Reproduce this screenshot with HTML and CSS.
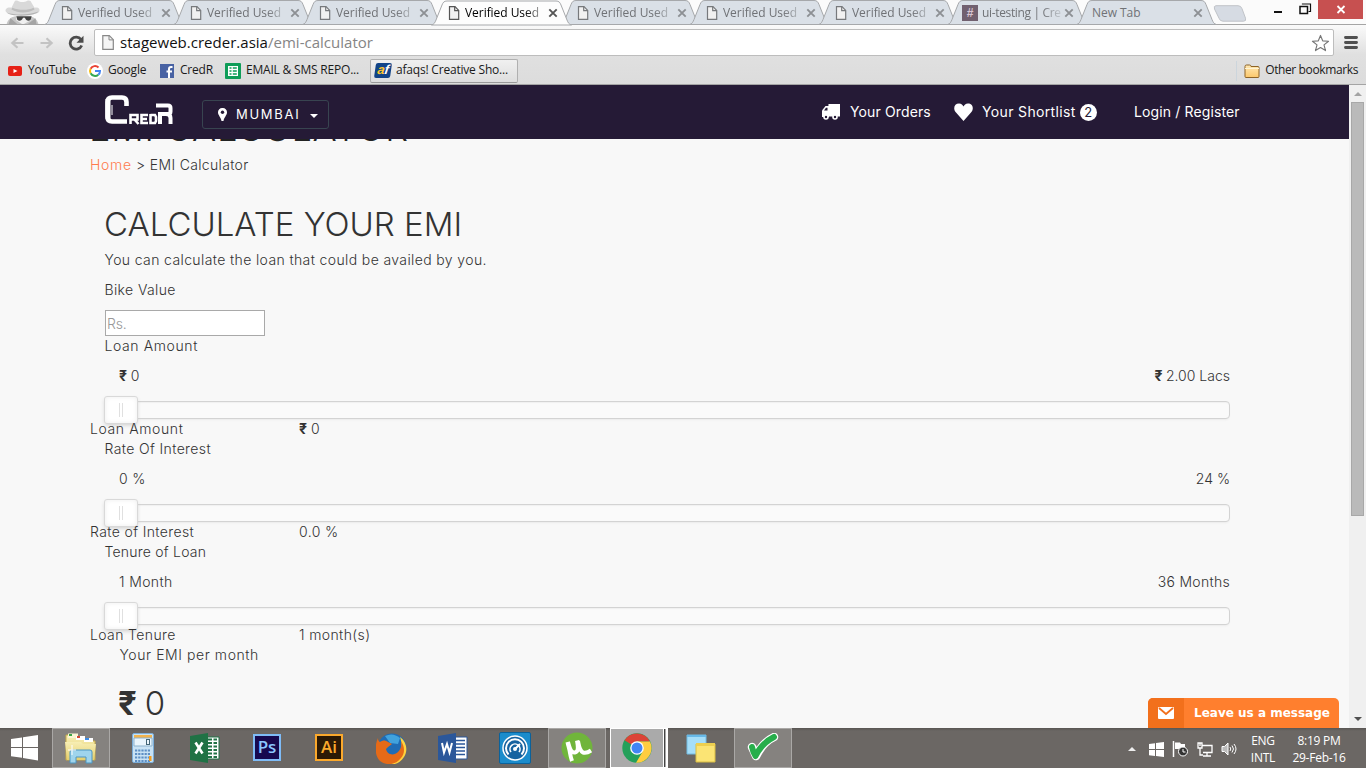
FILE: index.html
```html
<!DOCTYPE html>
<html lang="en">
<head>
<meta charset="utf-8">
<title>Verified Used Bikes</title>
<link rel="stylesheet" href="styles.css">
</head>
<body>
<svg class="defs" aria-hidden="true">
  <defs>
    <linearGradient id="folderfill" x1="0" y1="0" x2="0" y2="1"><stop offset="0" stop-color="#ffe9b5"/><stop offset="1" stop-color="#fbc76b"/></linearGradient>
    <linearGradient id="yellow" x1="0" y1="0" x2="0" y2="1"><stop offset="0" stop-color="#f7eeb4"/><stop offset="1" stop-color="#e5cf6d"/></linearGradient>
    <symbol id="tabshape" viewBox="0 0 141 25"><path d="M0.5 24.5 C3 24 4 22 5 19.500 L11 4.500 C12 2 13 .5 16 .5 H125 C128 .5 129 2 130 4.500 L136 19.500 C137 22 138 24 140.500 24.500Z" stroke="#a6a8ab" stroke-width="1"/></symbol>
    <symbol id="page" viewBox="0 0 12 14"><path d="M1.500 .7H7l3.700 3.700v8.900H1.500z" fill="#f1f1f1" stroke="currentColor" stroke-width="1.200"/><path d="M6.700 .7v4h4" fill="none" stroke="currentColor" stroke-width="1.200"/></symbol>
    <symbol id="close" viewBox="0 0 10 10"><path d="M1.300 1.300l7.400 7.400M8.700 1.300L1.300 8.700" stroke="currentColor" stroke-width="1.900"/></symbol>
  </defs>
</svg>
<div class="screen">
  <div class="tabstrip">
    <svg class="incognito" viewBox="0 0 38 25"><path d="M2 25c1-4 4-7 9-8h15c5 1 8 4 9 8z" fill="#c6c6c6"/><path d="M11 12h17l-1 9-7 4h-2l-6-4z" fill="#f0f0f0"/><path d="M1 12c-1-3 2-5 6-4l3-6c1-2 3-1.500 5-.5 3 1 6 .5 8-.5 3-1 4 0 5 2l3 5c4-1 6 1 5 4-3 5-31 6-35 0z" fill="#d9d9d9"/><path d="M8 8c7 3 16 3 22 0l1 2c-7 4-17 4-24 0z" fill="#bdbdbd"/><path d="M2 13c9 3 23 3 33-1-3 5-28 6-33 1z" fill="#b3b3b3"/><path d="M12 17h16l-1 3.500c-2 2-5 1-6-2h-2c-1 3-4 4-6 2z" fill="#444"/><path d="M6 19l7 6H4zm26 0l-8 6h9z" fill="#a5a5a5"/></svg>
    <div class="tabs">
      <div class="tab"><svg class="shape"><use href="#tabshape"/></svg><svg class="fav"><use href="#page"/></svg><span class="title">Verified Used</span><svg class="x"><use href="#close"/></svg></div>
      <div class="tab"><svg class="shape"><use href="#tabshape"/></svg><svg class="fav"><use href="#page"/></svg><span class="title">Verified Used</span><svg class="x"><use href="#close"/></svg></div>
      <div class="tab"><svg class="shape"><use href="#tabshape"/></svg><svg class="fav"><use href="#page"/></svg><span class="title">Verified Used</span><svg class="x"><use href="#close"/></svg></div>
      <div class="tab active"><svg class="shape"><use href="#tabshape"/></svg><svg class="fav"><use href="#page"/></svg><span class="title">Verified Used</span><svg class="x"><use href="#close"/></svg></div>
      <div class="tab"><svg class="shape"><use href="#tabshape"/></svg><svg class="fav"><use href="#page"/></svg><span class="title">Verified Used</span><svg class="x"><use href="#close"/></svg></div>
      <div class="tab"><svg class="shape"><use href="#tabshape"/></svg><svg class="fav"><use href="#page"/></svg><span class="title">Verified Used</span><svg class="x"><use href="#close"/></svg></div>
      <div class="tab"><svg class="shape"><use href="#tabshape"/></svg><svg class="fav"><use href="#page"/></svg><span class="title">Verified Used</span><svg class="x"><use href="#close"/></svg></div>
      <div class="tab"><svg class="shape"><use href="#tabshape"/></svg><span class="hash">#</span><span class="title">ui-testing | Cre</span><svg class="x"><use href="#close"/></svg></div>
      <div class="tab"><svg class="shape"><use href="#tabshape"/></svg><span class="title bare">New Tab</span><svg class="x"><use href="#close"/></svg></div>
    </div>
    <svg class="newtab" viewBox="0 0 34 17"><path d="M3 .7H25q3 0 4 3l3.500 9.500q1 3-2 3H10q-3 0-4-3L1.500 4Q.5 .7 3 .7z" fill="#d6dbe3" stroke="#c0c3c8"/></svg>
    <svg class="winbtns" viewBox="0 0 92 19"><path d="M0 11h8v2H0z" fill="#111"/><path d="M28.500 4.500V4h8v7.500h-2" fill="none" stroke="#111" stroke-width="1.200"/><path d="M26 6.500h7.500v7H26z" fill="none" stroke="#111" stroke-width="1.500"/><path d="M44 0h45v19H44z" fill="#c75050"/><path d="M63.500 6l7 7m0-7l-7 7" stroke="#fff" stroke-width="1.800"/></svg>
  </div>

  <div class="toolbar">
    <div class="nav">
      <svg class="arrow" viewBox="0 0 16 14"><path d="M15 7H2M8 1.500L2 7l6 5.500" fill="none" stroke="#c3c3c3" stroke-width="2.600"/></svg>
      <svg class="arrow" viewBox="0 0 16 14"><path d="M1 7h13M8 1.500L14 7l-6 5.500" fill="none" stroke="#c3c3c3" stroke-width="2.600"/></svg>
      <svg class="reload" viewBox="0 0 16 16"><path d="M13 4.500A6 6 0 1 0 13.700 10.500" fill="none" stroke="#4c4c4c" stroke-width="2.800"/><path d="M15.500 .8v7h-7z" fill="#4c4c4c"/></svg>
      <div class="omnibox">
        <svg class="urlpage" viewBox="0 0 12 15"><path d="M.8 .7h6.500l4 4v9.600H.8z" fill="#f5f5f5" stroke="#888" stroke-width="1.200"/><path d="M7 .7v4.200h4.300" fill="none" stroke="#888"/></svg>
        <span class="url">stageweb.creder.asia<span class="path">/emi-calculator</span></span>
        <svg class="star" viewBox="0 0 20 19"><path d="M10 1.500l2.300 5.700 6.200.4-4.800 3.900 1.600 6L10 14.200l-5.300 3.300 1.600-6L1.500 7.600l6.200-.4z" fill="#fff" stroke="#777" stroke-width="1.200" stroke-linejoin="round"/></svg>
      </div>
      <svg class="menu" viewBox="0 0 14 13"><path d="M1.500 1.500h11M1.500 6.500h11M1.500 11.500h11" stroke="#505050" stroke-width="2.900" stroke-linecap="round"/></svg>
    </div>
    <div class="bookmarks">
      <div class="bm yt"><svg width="14" height="10" viewBox="0 0 14 10"><rect width="14" height="10" rx="2" fill="#e62117"/><path d="M5.500 3l4 2-4 2z" fill="#fff"/></svg><span>YouTube</span></div>
      <div class="bm gg"><svg width="16" height="16" viewBox="0 0 16 16"><circle cx="8" cy="8" r="8" fill="#fff"/><path d="M11.500 4.500A5 5 0 0 0 3.600 5.700" stroke="#ea4335" fill="none" stroke-width="2"/><path d="M3.600 5.700a5 5 0 0 0 0 4.600" stroke="#fbbc05" fill="none" stroke-width="2"/><path d="M3.600 10.300a5 5 0 0 0 7.700 1.400" stroke="#34a853" fill="none" stroke-width="2"/><path d="M8 8h5a5 5 0 0 1-1.700 3.800" stroke="#4285f4" fill="none" stroke-width="2"/></svg><span>Google</span></div>
      <div class="bm cr"><svg width="14" height="14" viewBox="0 0 14 14"><rect width="14" height="14" fill="#4862a3"/><path d="M12.500 3H11q-2 0-2 2v9M6.500 7.500H12" stroke="#fff" stroke-width="2" fill="none"/></svg><span>CredR</span></div>
      <div class="bm em"><svg width="16" height="16" viewBox="0 0 16 16"><rect width="16" height="16" rx="1" fill="#0f9d58"/><path d="M3 3h10v10H3z" fill="#fff"/><path d="M4.500 5h2M7.800 5h4M4.500 8h2M7.800 8h4M4.500 11h2M7.800 11h4" stroke="#0f9d58" stroke-width="1.600"/></svg><span>EMAIL &amp; SMS REPO...</span></div>
      <div class="bm af"><span class="aficon"><span class="a">a</span>f</span><span>afaqs! Creative Sho...</span></div>
      <div class="other"><svg width="16" height="14" viewBox="0 0 16 14"><path d="M1 12.500V2.500q0-1.500 1.500-1.500h3q1.500 0 1.500 1.500h7q1 0 1 1v9q0 1-1 1H2q-1 0-1-1z" fill="url(#folderfill)" stroke="#8d6326"/><path d="M1 4.500h14" stroke="#fff4d4"/></svg><span>Other bookmarks</span></div>
    </div>
  </div>

  <div class="viewport">
    <div class="site">
      <header class="head">
        <svg class="logo" viewBox="0 0 68 30" fill="none" stroke="#fff"><path d="M21.500 11V7q0-4.500-4.500-4.500H7Q2.500 2.500 2.500 7v15q0 4.500 4.500 4.500h15" stroke-width="4.600"/><path d="M3 4v20" stroke-width="5"/><path d="M7 10v10" stroke-width="1"/><path d="M25.500 29v-9h7v4.500h-7m4 0l4 4.500M43 20h-6.500v8H43M36.500 24H42M45.500 19v9H50l1-2v-4l-1-2h-4.500" stroke-width="2.600"/><path d="M51 10.500h12q2.500 0 2.500 2.500v3.500q0 2.500-2.500 2.500H55V29M61 19q4.500 0 4.500 4V29" stroke-width="4"/></svg>
        <div class="city"><svg width="9" height="13" viewBox="0 0 9 13"><path d="M4.500 0A4.300 4.300 0 0 1 9 4.500C9 7 6 9.500 5.500 13h-2C3 9.500 0 7 0 4.500A4.300 4.300 0 0 1 4.500 0z" fill="#fff"/><circle cx="4.500" cy="4.300" r="1.700" fill="#251a36"/></svg><span>MUMBAI</span><i class="caret"></i></div>
        <nav class="links">
          <a class="orders"><svg width="18" height="16" viewBox="0 0 18 16"><path d="M6.500 0H18v12.500H6z" fill="#fff"/><path d="M7 2H3.500L0 6.500v6.500h7z" fill="#fff"/><path d="M5.500 3.800H4L2 6.500h3.500z" fill="#251a36"/><circle cx="4" cy="13" r="2" fill="#251a36" stroke="#fff" stroke-width="1.600"/><circle cx="13" cy="13" r="2" fill="#251a36" stroke="#fff" stroke-width="1.600"/></svg><span>Your Orders</span></a>
          <a class="short"><svg width="19" height="18" viewBox="0 0 19 18"><path d="M9.500 18L2 9.600C-1.500 5.500.5.500 5 .5c2.500 0 3.700 1.500 4.500 3 .8-1.500 2-3 4.500-3 4.500 0 6.500 5 3 9.100z" fill="#fff"/></svg><span>Your Shortlist</span><b class="badge">2</b></a>
          <a class="login">Login / Register</a>
        </nav>
      </header>
      <main class="content">
        <div class="covered"><h1 class="title1">EMI CALCULATOR</h1></div>
        <div class="crumbs"><a class="home">Home</a> &gt; EMI Calculator</div>
        <div class="calc">
          <h2 class="heading">CALCULATE YOUR EMI</h2>
          <p class="lead">You can calculate the loan that could be availed by you.</p>
          <p class="lead">Bike Value</p>
          <input class="value" placeholder="Rs.">
        </div>
        <section class="slider">
          <div class="label wide">Loan Amount</div>
          <div class="range"><span><b class="rs">₹</b> 0</span><span class="max"><b class="rs">₹</b> 2.00 Lacs</span></div>
          <div class="track"><div class="handle"><i class="grip"></i></div></div>
          <div class="result wide"><span>Loan Amount</span><span><b class="rs">₹</b> 0</span></div>
        </section>
        <section class="slider">
          <div class="label">Rate Of Interest</div>
          <div class="range"><span>0 %</span><span class="max">24 %</span></div>
          <div class="track"><div class="handle"><i class="grip"></i></div></div>
          <div class="result"><span>Rate of Interest</span><span>0.0 %</span></div>
        </section>
        <section class="slider">
          <div class="label tight">Tenure of Loan</div>
          <div class="range"><span>1 Month</span><span class="max months">36 Months</span></div>
          <div class="track"><div class="handle"><i class="grip"></i></div></div>
          <div class="result"><span>Loan Tenure</span><span>1 month(s)</span></div>
        </section>
        <div class="emi">Your EMI per month</div>
        <div class="total"><b class="rs">₹</b> 0</div>
      </main>
      <div class="chat"><div class="mail"><svg width="16" height="12" viewBox="0 0 16 12"><rect width="16" height="12" rx="1" fill="#fff"/><path d="M1 1l7 6 7-6" fill="none" stroke="#f2701c" stroke-width="1.800"/></svg></div><span>Leave us a message</span></div>
    </div>
    <div class="scrollbar"><i class="up"></i><div class="thumb"></div><i class="down"></i></div>
  </div>

  <div class="taskbar">
    <div class="start"><svg width="27" height="26" viewBox="0 0 27 26"><path d="M0 4l11-1.600V12H0zM12 2.200L27 0v12H12zM0 13h11v9.800L0 21.200zM12 13h15v12.500L12 23z" fill="#fff"/></svg></div>
    <div class="apps">
      <div class="app open"><svg width="34" height="32" viewBox="0 0 34 32"><path d="M2 3h10l1 3h8l1 3h9v19H2z" fill="url(#yellow)" stroke="#c5a94b"/><path d="M4 1.500h10V6H4z" fill="#faf5d4"/><path d="M5 2h3v2H5z" fill="#3ba345"/><path d="M12 4h9v4h-9z" fill="#fff"/><path d="M13 4h3v2h-3z" fill="#d64a32"/><path d="M20 6h9v4h-9z" fill="#fff"/><path d="M21 6h4v2h-4z" fill="#3c8ce7"/><path d="M1 10h16l2 2h13l-2 16H3z" fill="url(#yellow)"/><path d="M6 31V20q0-2 2-2h18q2 0 2 2v11h-6v-6H12v6z" fill="#9fd4ec" stroke="#4d96c2"/><path d="M8 13v10M4 18h8" stroke="#fff" stroke-width="1"/></svg></div>
      <div class="app"><svg width="22" height="30" viewBox="0 0 22 30"><rect x=".5" y=".5" width="21" height="29" rx="1.500" fill="#c8e2f4" stroke="#7badd8"/><path d="M2 2h18v3H2z" fill="#f0b24e"/><path d="M2 5h18v8H2z" fill="#eaf5fc" stroke="#8db2cd"/><rect x="14.500" y="6.500" width="3" height="5" fill="none" stroke="#467"/><path d="M3 17.500h16M3 21h16M3 24.500h16M3 28h16" stroke="#5d8fc4" stroke-width="2.200" stroke-dasharray="2.200 1"/><path d="M17 23h2.500v5H17z" fill="#f39c1f"/></svg></div>
      <div class="app"><svg width="30" height="30" viewBox="0 0 30 30"><path d="M17 4h12v22H17z" fill="#fff" stroke="#217346"/><path d="M18 6.500h9M18 10h9M18 13.500h9M18 17h9M18 20.500h9M18 24h9" stroke="#217346" stroke-width="2" stroke-dasharray="4 1.500"/><path d="M0 3l18-3v30L0 27z" fill="#207245"/><path d="M5.500 9.500l7 11m0-11l-7 11" stroke="#fff" stroke-width="2.600"/></svg></div>
      <div class="app"><span class="adobe ps">Ps</span></div>
      <div class="app"><span class="adobe ai">Ai</span></div>
      <div class="app"><svg width="31" height="31" viewBox="0 0 31 31"><circle cx="16" cy="14.500" r="14" fill="#1f6cb5"/><path d="M9 3q8-4 15 2l-2 6-8-1z" fill="#41a2dd"/><path d="M24 4c7 5 8 14 4 20s-9 8-14 7c11-3 14-15 10-27z" fill="#ffd23d"/><path d="M2 5c0 3 1 3 2 4 3-2 5-2 8 0l4 2-4 3-2 2c1 6 8 7 12 3 3-3 4-7 3-11 4 6 4 12 0 17-5 7-15 8-21 3C-2 22-1 11 2 5z" fill="#e66a17"/></svg></div>
      <div class="app"><svg width="30" height="30" viewBox="0 0 30 30"><path d="M17 4h12v22H17z" fill="#fff" stroke="#2b579a"/><path d="M18 7.500h9M18 11h9M18 14.500h9M18 18h9M18 21.500h9" stroke="#2b579a" stroke-width="1.600"/><path d="M0 3l18-3v30L0 27z" fill="#2b579a"/><path d="M4 10l2 9.500L9 11l2.500 8.500L14 10" fill="none" stroke="#fff" stroke-width="2"/></svg></div>
      <div class="app"><svg width="32" height="32" viewBox="0 0 32 32" fill="none"><rect x=".5" y=".5" width="31" height="31" rx="1.500" fill="#1b8ccc" stroke="#0b629b"/><circle cx="16" cy="16" r="12" fill="#1763a0" stroke="#fff" stroke-width="1.500"/><path d="M9.500 22.500a9 9 0 1 1 13 0" stroke="#fff" stroke-width="2"/><path d="M12 20a5 5 0 1 1 8 0" stroke="#fff" stroke-width="1.600"/><path d="M16 17l5-5" stroke="#fff" stroke-width="2"/><circle cx="16" cy="17" r="2" fill="#fff"/></svg></div>
      <div class="app open"><svg width="32" height="32" viewBox="0 0 32 32"><circle cx="16" cy="16" r="15.500" fill="#70b53b"/><path d="M6.500 10c1 5 2 7 2.500 11 .5 3 1 5 2 8M7 10c2 7 3 11 7 10.500 4-.5 3-7 2-12M17 9c1 5 1.500 9.500 5 11.500 3 1 5 0 8-2" fill="none" stroke="#fff" stroke-width="4"/></svg></div>
      <div class="app chrome"><svg width="30" height="30" viewBox="0 0 30 30"><circle cx="15" cy="15" r="14.700" fill="#24a05a"/><path d="M15 15L2.500 7.300A14.700 14.700 0 0 1 28 8.500H15z" fill="#dc4437"/><path d="M15 8.500h13A14.700 14.700 0 0 1 14 29.700L21 18z" fill="#ffcd40"/><circle cx="15" cy="15" r="6.800" fill="#fff"/><circle cx="15" cy="15" r="5.500" fill="#4285f4"/></svg></div>
      <div class="app"><svg width="30" height="29" viewBox="0 0 30 29"><path d="M1 1h19v19H1z" fill="#a5def9" stroke="#73bde2"/><path d="M1 1h19v2H1z" fill="#67b9e8"/><path d="M10 10h19v18H10z" fill="#fbe474" stroke="#d9bd42"/><path d="M10 9h19v3H10z" fill="#edcf50"/></svg></div>
      <div class="app open"><svg width="32" height="30" viewBox="0 0 32 30"><path d="M5 14q2 4 4 9Q16 9 27 4" fill="none" stroke="#fff" stroke-width="8.500" stroke-linecap="round" stroke-linejoin="round"/><path d="M5 14q1 5 3.500 9Q15 10 27 4" fill="none" stroke="#27ae4b" stroke-width="6" stroke-linecap="round" stroke-linejoin="round"/></svg></div>
    </div>
    <div class="tray">
      <i class="trayup"></i>
      <svg width="15" height="15" viewBox="0 0 15 15"><path d="M0 2l6-.8V7H0zM7 1l8-1v7H7zM0 8h6v6l-6-.8zM7 8h8v7l-8-1z" fill="#fff"/></svg>
      <svg width="17" height="16" viewBox="0 0 17 16"><path d="M1.500 0v16" stroke="#fff" stroke-width="1.500"/><path d="M3 1.500h5l1 1.500h4v6H8L7 8H3z" fill="#fff"/><circle cx="11" cy="10.500" r="4.500" fill="#333" stroke="#fff"/><path d="M11 8v3h2.500" fill="none" stroke="#fff"/></svg>
      <svg width="16" height="15" viewBox="0 0 16 15" fill="none" stroke="#fff"><path d="M5 3.500h10v7H6M10 11v3M6 14h8M3 6v7h3M1 1h4v5H1zM3 1v3" stroke-width="1.300"/></svg>
      <svg width="16" height="14" viewBox="0 0 16 14"><path d="M1 4.500h2.500L7 1v12L3.500 9.500H1z" fill="#bbb" stroke="#fff"/><path d="M9 5q1.500 2 0 4M11 3.500q3 3.500 0 7M13 2q4 5 0 10" fill="none" stroke="#fff"/></svg>
    </div>
    <div class="lang"><span>ENG</span><span>INTL</span></div>
    <div class="clock"><span>8:19 PM</span><span>29-Feb-16</span></div>
  </div>
</div>
</body>
</html>
```
FILE: styles.css
```css
* { box-sizing: border-box; }
body { margin: 0; overflow: hidden; font-family: "Open Sans", "Noto Sans", sans-serif; }
svg { display: block; flex: none; }
.defs { position: absolute; width: 0; height: 0; }
.screen { width: 1366px; height: 768px; display: flex; flex-direction: column; overflow: hidden; background: #f8f8f8; }

/* tab strip */
.tabstrip { height: 25px; flex: none; display: flex; background: #fbfbfb; border-bottom: 1px solid #a5a5a5; }
.incognito { width: 38px; height: 24px; margin-left: 4px; }
.tabs { display: flex; flex: none; width: 1173px; margin-left: 2px; }
.tab { position: relative; z-index: 1; width: 141px; height: 25px; margin-right: -12px; padding-left: 17px; display: flex; align-items: center; color: #77797c; fill: #dae0e7; flex: none; }
.tab .shape { position: absolute; left: 0; top: 0; width: 141px; height: 25px; z-index: -1; }
.tab.active { color: #555; fill: #fdfdfd; z-index: 2; height: 26px; padding-bottom: 1px; }
.tab.active .shape { height: 26px; }
.fav { width: 12px; height: 14px; }
.title { width: 80px; margin-left: 5px; font-size: 12px; line-height: 24px; letter-spacing: -0.05px; white-space: nowrap; overflow: hidden; color: #707276; -webkit-mask-image: linear-gradient(90deg, #000 60px, transparent 84px); mask-image: linear-gradient(90deg, #000 60px, transparent 84px); }
.active .title { color: #000; }
.title.bare { margin-left: -1px; width: 98px; -webkit-mask-image: none; mask-image: none; }
.x { width: 10px; height: 10px; margin-left: 3px; color: #8d9094; }
.active .x { color: #555; }
.hash { width: 16px; height: 16px; margin-left: -2px; background: #71606f; color: #d9c5d2; font: bold 12px/16px "Liberation Sans", sans-serif; text-align: center; }
.hash + .title { margin-left: 4px; width: 79px; letter-spacing: -0.35px; }
.newtab { width: 34px; height: 17px; margin: 5px 0 0 -4px; }
.winbtns { width: 92px; height: 19px; margin-left: auto; }

/* toolbar */
.toolbar { height: 60px; flex: none; background: linear-gradient(#fafafa, #e0e0e0 50%, #dcdcdc); border-bottom: 1px solid #a4a4a4; }
.nav { height: 33px; display: flex; align-items: center; padding-left: 10px; padding-top: 2px; }
.arrow { width: 15px; height: 12px; margin-right: 14px; }
.reload { width: 16px; height: 16px; }
.omnibox { width: 1240px; height: 27px; margin-left: 10px; padding: 0 3px 0 7px; border: 1px solid #bdbdbd; border-radius: 2px; background: #fff; display: flex; align-items: center; }
.urlpage { width: 12px; height: 15px; }
.url { margin-left: 6px; padding-bottom: 2px; font-size: 15px; line-height: 22px; letter-spacing: 0.02px; color: #111; }
.path { color: #858585; }
.star { width: 19px; height: 18px; margin-left: auto; }
.menu { width: 14px; height: 13px; margin-left: 10px; }
.bookmarks { height: 25px; display: flex; align-items: center; font-size: 12px; letter-spacing: -0.2px; color: #1a1a1a; }
.bookmarks span { white-space: nowrap; }
.bm { display: flex; align-items: center; flex: none; gap: 6px; height: 25px; }
.bm > span:last-child, .other span { padding-bottom: 2px; }
.yt { width: 79px; padding-left: 8px; }
.gg { width: 81px; padding-left: 8px; gap: 5px; }
.cr { width: 65px; }
.em { width: 145px; gap: 5px; }
.af { width: 148px; height: 24px; padding-left: 4px; border: 1px solid #b0b0b0; border-bottom-color: #999; border-radius: 2px; background: linear-gradient(#f0f0f0, #dedede); gap: 5px; }
.aficon { width: 16px; height: 15px; background: #124488; color: #fff; font: italic bold 13px/14px "Liberation Sans", sans-serif; border-radius: 2px; text-align: center; transform: skewX(-8deg); }
.aficon .a { color: #ffc72e; }
.other { margin-left: auto; margin-right: 8px; padding-left: 7px; border-left: 1px solid #ccd5dc; display: flex; gap: 5px; align-items: center; height: 20px; letter-spacing: -0.38px; }

/* web page */
.viewport { height: 643px; flex: none; display: flex; }
.site { width: 1349px; height: 643px; position: relative; background: #f8f8f8; overflow: hidden; font-family: Inter, "Open Sans", sans-serif; font-weight: 300; font-size: 14px; line-height: 20px; letter-spacing: 0.38px; color: #333; }
.head { height: 54px; background: #251a36; color: #fff; display: flex; padding-left: 105px; position: relative; z-index: 1; letter-spacing: 0.13px; }
.logo { width: 68px; height: 30px; margin-top: 10px; }
.city { width: 127px; height: 29px; margin: 15px 0 0 29px; border: 1px solid #384450; border-radius: 3px; display: flex; align-items: center; padding-left: 15px; font-size: 13px; font-weight: 400; letter-spacing: 1.7px; }
.city span { width: 75px; margin-left: 9px; padding-bottom: 1px; }
.caret { margin-left: -1px; border: 4px solid transparent; border-top-color: #fff; border-bottom: 0; margin-top: 3px; }
.links { margin-left: 493px; display: flex; font-weight: 400; white-space: nowrap; padding-top: 17px; }
.links a { display: flex; align-items: center; height: 20px; flex: none; }
.orders { width: 132px; gap: 10px; }
.short { width: 180px; gap: 9px; letter-spacing: 0.35px; }
.badge { width: 17px; height: 17px; margin-left: -5px; background: #fff; color: #251a36; border-radius: 50%; font-weight: 400; font-size: 13px; line-height: 17px; letter-spacing: 0; text-align: center; }
.content { padding-left: 90px; }
.covered { height: 16px; position: relative; }
.title1 { position: absolute; left: -1px; bottom: 7px; margin: 0; font-size: 36px; line-height: 40px; font-weight: 300; color: #222; letter-spacing: .8px; white-space: nowrap; }
.crumbs { height: 20px; letter-spacing: 0.33px; }
.home { color: #ff7b4d; letter-spacing: 0.7px; }
.calc { padding-left: 15px; padding-top: 29px; }
.heading { margin: 0 0 6px -1px; font-size: 33px; line-height: 40px; font-weight: 300; letter-spacing: 0; }
.lead { margin: 0 0 10px; }
.calc .lead { text-indent: -0.5px; }
.value { display: block; width: 160px; height: 26px; margin: 0; padding: 1px 1px; border: 1px solid #a9a9a9; border-radius: 0; background: #fff; font: inherit; letter-spacing: -0.2px; }
.value::placeholder { color: #999; opacity: 1; }
.slider { width: 1140px; height: 103px; }
.wide { letter-spacing: 0.6px; }
.tight { letter-spacing: 0.22px; }
.label { padding-left: 14.5px; height: 20px; }
.range { display: flex; justify-content: space-between; margin: 10px 0 15px; padding-left: 29px; height: 20px; }
.max { letter-spacing: 0; }
.months { letter-spacing: 0.3px; }
.track { margin-left: 15px; height: 18px; border: 1px solid #d3d3d3; border-radius: 4px; background: #fafafa; box-shadow: inset 0 1px 1px #f0f0f0, 0 2px 3px -2px #ddd; }
.handle { width: 34px; height: 28px; margin: -6px 0 0 -2px; border: 1px solid #d9d9d9; border-radius: 3px; background: #fff; box-shadow: inset 0 0 5px #eee, 0 2px 4px -1px #ccc; display: flex; justify-content: center; align-items: center; }
.grip { width: 4px; height: 14px; border: solid #e0e0e0; border-width: 0 1px; }
.result { display: flex; height: 20px; position: relative; }
.result span:first-child { width: 209px; }
.rs { font-weight: 700; letter-spacing: -0.5px; }
.emi { padding-left: 29.5px; letter-spacing: 0.58px; }
.total { padding-left: 28px; margin-top: 18px; font-size: 33px; line-height: 40px; letter-spacing: -0.8px; }
.chat { position: absolute; right: 10px; bottom: 0; width: 191px; height: 30px; border-radius: 5px 5px 0 0; overflow: hidden; background: #ff7f2e; color: #fff; display: flex; align-items: center; font: bold 12px/30px "DejaVu Sans", sans-serif; letter-spacing: 0; white-space: nowrap; }
.mail { width: 36px; height: 30px; background: #f2701c; display: flex; align-items: center; justify-content: center; margin-right: 10px; flex: none; }
.scrollbar { width: 17px; background: #f0f0f0; display: flex; flex-direction: column; align-items: center; }
.up { border: 4px solid transparent; border-top: 0; border-bottom-color: #a3a3a3; margin: 7px 0 6px; }
.thumb { width: 13px; height: 414px; background: #bababa; border: 1px solid #a8a8a8; }
.down { border: 4px solid transparent; border-bottom: 0; border-top-color: #505050; margin-top: auto; margin-bottom: 7px; }

/* taskbar */
.taskbar { height: 40px; flex: none; background: linear-gradient(#595653, #6b6764 3px, #6b6764); display: flex; color: #fff; }
.start { width: 52px; display: flex; align-items: center; padding-left: 11px; }
.apps { display: flex; gap: 4px; }
.app { width: 58px; height: 40px; display: flex; align-items: center; justify-content: center; flex: none; }
.open { border: 1px solid #aaa8a6; background: #85827f; }
.chrome { border: 1px solid #fff; border-right: 2px solid #fff; background: linear-gradient(90deg, #aaa 52px, #fff 52px, #fff 53px, #444 53px, #444 54px, #aaa 54px); padding-right: 3px; }
.adobe { width: 28px; height: 27px; font: 600 17px/22px "Open Sans", sans-serif; text-align: center; margin-bottom: 2px; }
.ps { color: #8bc8ff; border: 2px solid #7fbcf7; background: #16094f; }
.ai { color: #fba92c; border: 2px solid #fba92c; background: #2c1a05; }
.tray { margin-left: auto; display: flex; align-items: center; gap: 8px; padding-top: 2px; }
.trayup { border: 4px solid transparent; border-top: 0; border-bottom-color: #eee; margin-right: 5px; }
.lang, .clock { display: flex; flex-direction: column; align-items: center; font-size: 12px; line-height: 17px; padding-top: 4px; letter-spacing: -0.25px; white-space: nowrap; }
.lang { width: 30px; margin-left: 11px; }
.clock { width: 60px; margin: 0 17px 0 11px; }
```
